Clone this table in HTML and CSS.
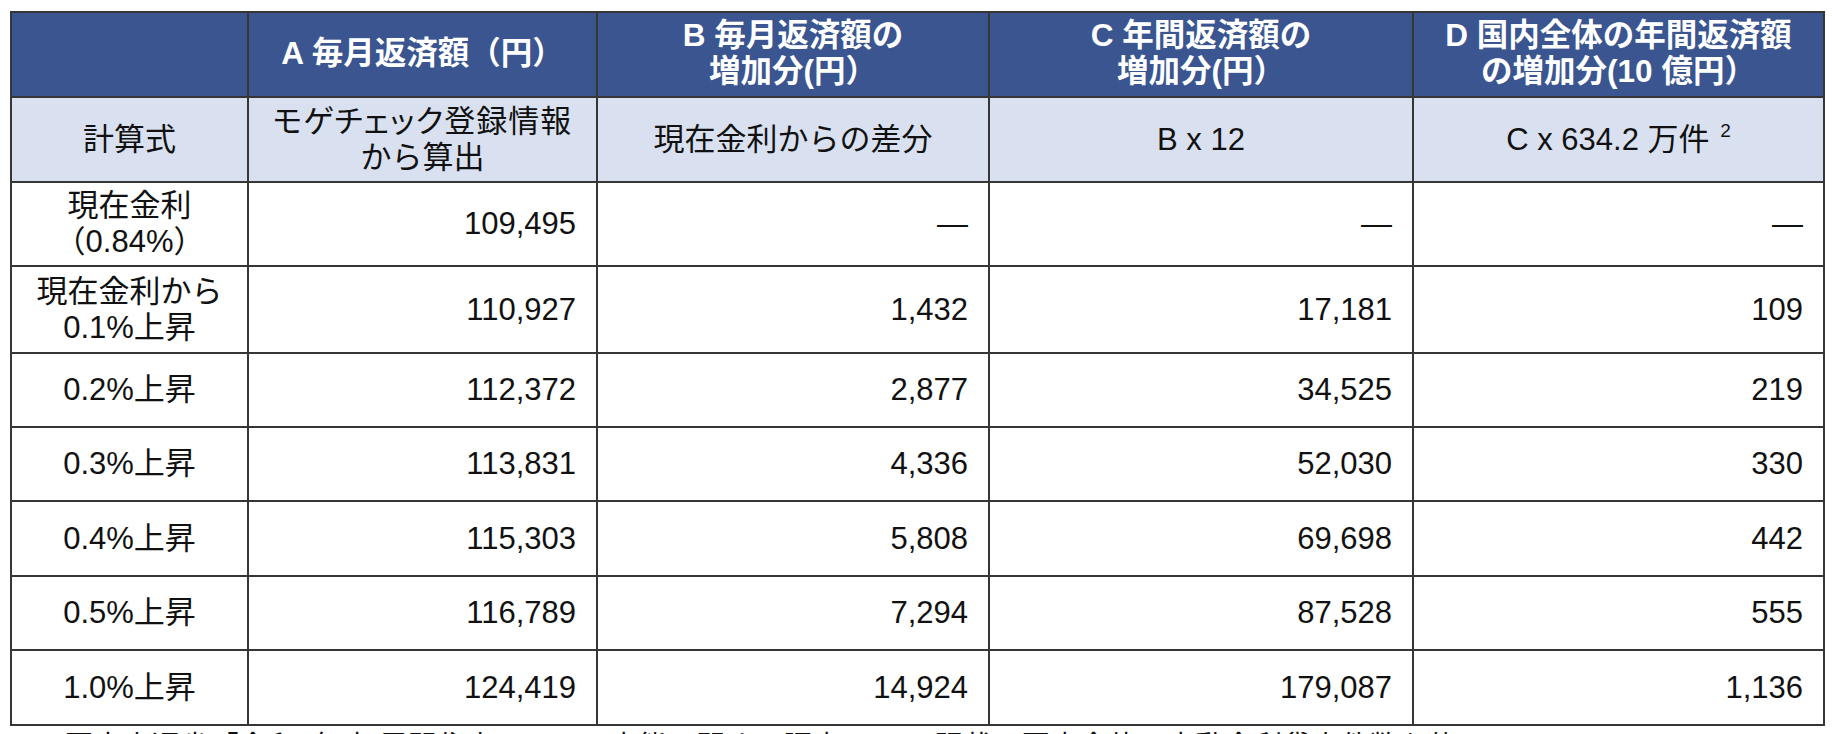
FILE: index.html
```html
<!DOCTYPE html>
<html lang="ja">
<head>
<meta charset="utf-8">
<title>金利上昇による返済額の試算</title>
<link rel="stylesheet" href="styles.css">
</head>
<body>
<div class="page">
  <table class="rates">
    <colgroup>
      <col class="c0"><col class="c1"><col class="c2"><col class="c3"><col class="c4">
    </colgroup>
    <thead>
      <tr class="head">
        <th></th>
        <th>A 毎月返済額（円）</th>
        <th>B 毎月返済額の<br>増加分(円）</th>
        <th>C 年間返済額の<br>増加分(円）</th>
        <th>D 国内全体の年間返済額<br>の増加分(10 億円）</th>
      </tr>
      <tr class="formula">
        <td>計算式</td>
        <td><span class="prop">モゲチェック登録情報</span><br>から算出</td>
        <td>現在金利からの差分</td>
        <td>B x 12</td>
        <td>C x 634.2 万件 <sup>2</sup></td>
      </tr>
    </thead>
    <tbody>
      <tr class="r1">
        <th>現在金利<br>（0.84%）</th>
        <td>109,495</td><td>—</td><td>—</td><td>—</td>
      </tr>
      <tr class="r2">
        <th>現在金利から<br>0.1%上昇</th>
        <td>110,927</td><td>1,432</td><td>17,181</td><td>109</td>
      </tr>
      <tr class="row">
        <th>0.2%上昇</th>
        <td>112,372</td><td>2,877</td><td>34,525</td><td>219</td>
      </tr>
      <tr class="row">
        <th>0.3%上昇</th>
        <td>113,831</td><td>4,336</td><td>52,030</td><td>330</td>
      </tr>
      <tr class="row odd">
        <th>0.4%上昇</th>
        <td>115,303</td><td>5,808</td><td>69,698</td><td>442</td>
      </tr>
      <tr class="row">
        <th>0.5%上昇</th>
        <td>116,789</td><td>7,294</td><td>87,528</td><td>555</td>
      </tr>
      <tr class="row odd">
        <th>1.0%上昇</th>
        <td>124,419</td><td>14,924</td><td>179,087</td><td>1,136</td>
      </tr>
    </tbody>
  </table>
  <p class="note"><span class="mark">2</span> 国土交通省「令和4年度 民間住宅ローンの実態に関する調査」P.29 記載の国内全体の変動金利貸出件数を使用</p>
</div>
</body>
</html>
```

FILE: styles.css
```css
html, body {
  margin: 0;
  padding: 0;
  background: #ffffff;
}

.page {
  padding: 11px 0 0 10px;
  font-family: "Liberation Sans", "Noto Sans CJK JP", sans-serif;
  color: #111111;
}

.rates {
  border-collapse: collapse;
  table-layout: fixed;
  width: 1813px;
  font-size: 31px;
  line-height: 36px;
}

.c0 { width: 237px; }
.c1 { width: 349px; }
.c2 { width: 392px; }
.c3 { width: 424px; }
.c4 { width: 411px; }

.rates th,
.rates td {
  border: 2px solid #363636;
  padding: 0 20px 0 6px;
  text-align: right;
  vertical-align: middle;
  font-weight: normal;
  white-space: nowrap;
}

.rates tbody th {
  text-align: center;
  padding: 0 6px;
}

.head th {
  background: #3a5590;
  color: #ffffff;
  font-weight: bold;
  font-size: 31.5px;
  line-height: 36px;
  text-align: center;
  height: 79px;
  padding: 0 4px 4px 4px;
}

.formula td {
  background: #d9e1f0;
  text-align: center;
  height: 83px;
  padding: 0 4px;
}

.prop {
  font-feature-settings: "palt";
  letter-spacing: 1px;
}

.formula sup {
  font-size: 19px;
  line-height: 0;
  vertical-align: 13px;
  margin-left: 2px;
}

.r1 th, .r1 td { height: 82px; }
.r2 th, .r2 td { height: 85px; }
.row th, .row td { height: 72px; }
.row.odd th, .row.odd td { height: 73px; }

.note {
  margin: 3px 0 0 0;
  padding-left: 32px;
  font-size: 29px;
  line-height: 36px;
  white-space: nowrap;
}

.mark {
  font-size: 26px;
}
```
